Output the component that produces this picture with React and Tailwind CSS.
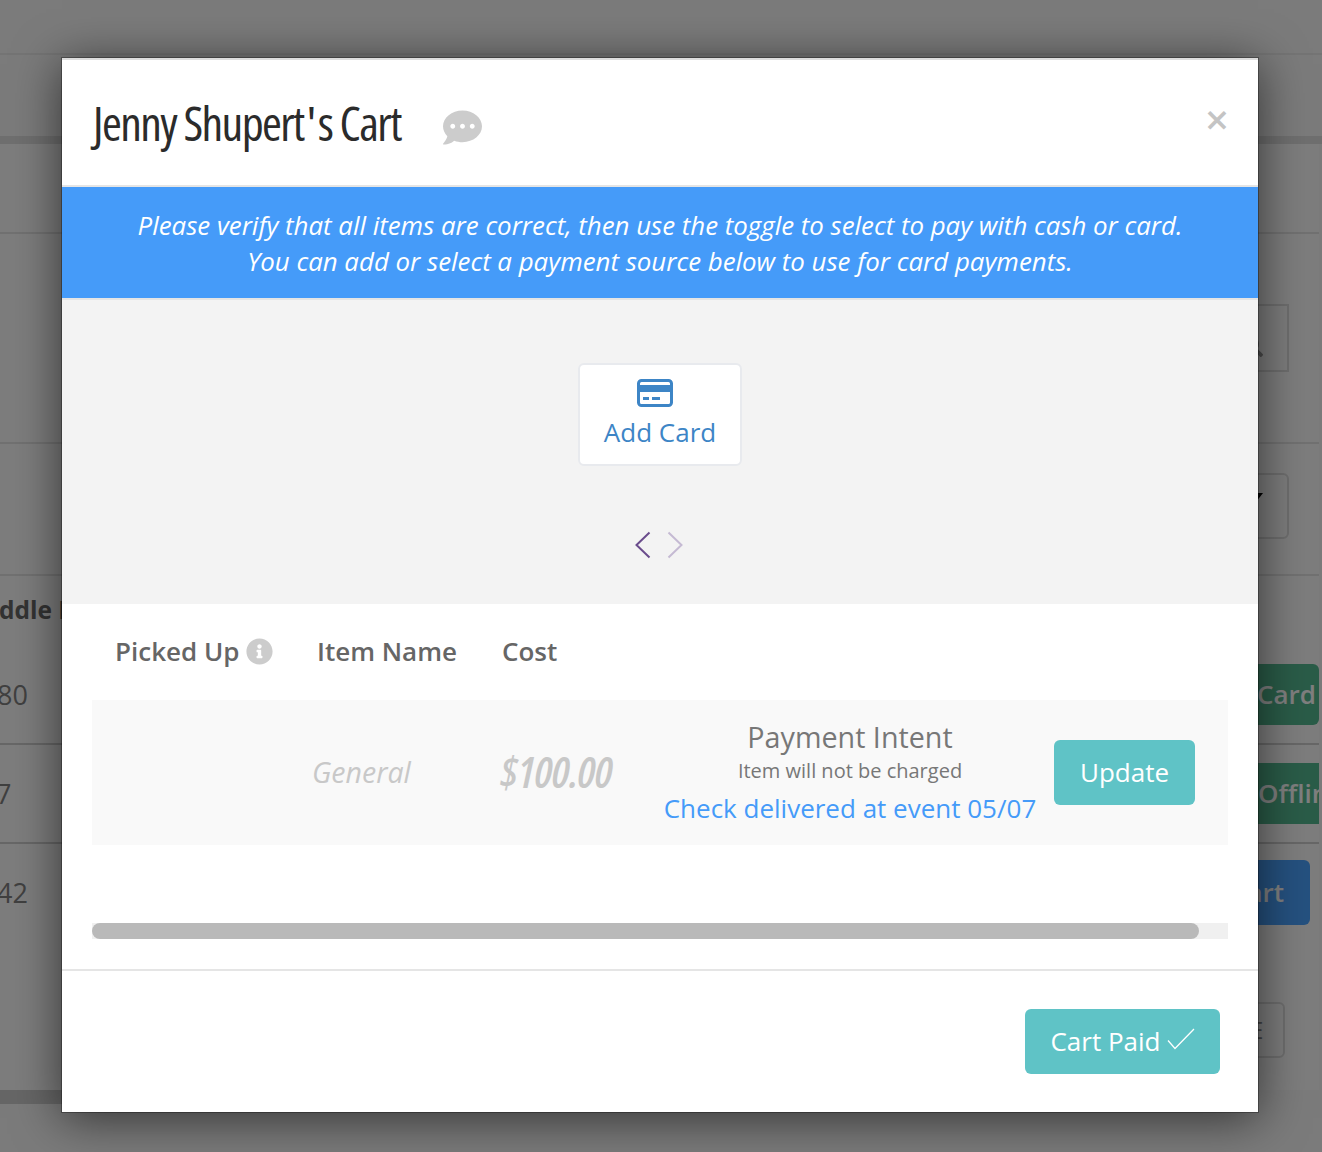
import { FaCommentDots, FaInfoCircle, FaSearch } from "react-icons/fa";

const sans = "font-['Open_Sans',sans-serif]";

function BackgroundPage() {
  return (
    <div className={`flex h-full w-full flex-col bg-[#f6f6f6] ${sans}`}>
      <div className="h-[55px] shrink-0 border-b-2 border-[#e8e8e8]" />
      <div className="h-[81px] shrink-0" />
      <div className="h-[8px] shrink-0 bg-[#dedede]" />
      <div className="h-[946px] w-[1319px] shrink-0 bg-[#fbfbfb]">
        <div className="h-[90px] border-b-2 border-[#e2e2e2]" />
        <div className="flex h-[210px] items-start justify-end border-b-2 border-[#e2e2e2] pr-[30px] pt-[70px]">
          <div className="flex h-[68px] w-[120px] items-center justify-end border-2 border-[#dcdcdc] pr-[24px] pt-[16px]">
            <FaSearch className="text-[22px] text-[#999999]" />
          </div>
        </div>
        <div className="flex h-[132px] items-start justify-end border-b-2 border-[#e2e2e2] pr-[30px] pt-[29px]">
          <div className="h-[66px] w-[120px] rounded-md border-2 border-[#dcdcdc] pl-[78px] pt-[18px]">
            <div className="h-0 w-0 border-x-[7px] border-t-[9px] border-x-transparent border-t-black" />
          </div>
        </div>
        <div className="flex h-[70px] items-center pb-[2px]">
          <span className="-ml-[1px] text-[24.5px] font-bold leading-none text-[#666]">ddle N</span>
        </div>
        <div className="flex h-[99px] items-start justify-between border-b-2 border-[#cfcfcf] pt-[18px]">
          <span className="-ml-[3px] text-[27px] leading-[62px] text-[#808080]">80</span>
          <div className="flex h-[61px] w-[130px] items-center justify-end rounded-md bg-[#54b890] pr-[3px] text-[26px] font-semibold text-white">
            Card
          </div>
        </div>
        <div className="flex h-[99px] items-start justify-between border-b-2 border-[#cfcfcf] pt-[18px]">
          <span className="-ml-[4px] text-[27px] leading-[62px] text-[#808080]">7</span>
          <div className="flex h-[61px] w-[130px] items-center overflow-hidden rounded-l-md bg-[#54b890] pl-[69px] text-[26px] font-semibold whitespace-nowrap text-white">
            Offline
          </div>
        </div>
        <div className="flex h-[158px] items-start justify-between pr-[9px] pt-[16px]">
          <span className="-ml-[3px] text-[27px] leading-[66px] text-[#808080]">42</span>
          <div className="flex h-[65px] w-[130px] items-center justify-end rounded-md bg-[#4aa3ff] pr-[26px] text-[26px] font-semibold text-white">
            art
          </div>
        </div>
        <div className="flex h-[88px] items-start justify-end pr-[34px]">
          <div className="flex h-[56px] w-[120px] items-center rounded-md border-2 border-[#dcdcdc] pl-[83px] text-[24px] text-[#888]">
            E
          </div>
        </div>
      </div>
      <div className="h-[14px] w-[62px] shrink-0 bg-[#cccccc]" />
    </div>
  );
}

function CardIcon() {
  return (
    <svg width="36" height="28" viewBox="0 0 36 28" fill="none">
      <rect x="1.5" y="1.5" width="33" height="25" rx="3" stroke="#3d85c6" strokeWidth="3" />
      <rect x="1" y="6" width="34" height="7" fill="#3d85c6" />
      <rect x="6" y="18" width="6" height="3" fill="#3d85c6" />
      <rect x="15" y="18" width="8" height="3" fill="#3d85c6" />
    </svg>
  );
}

function Arrow({ flip, color }) {
  return (
    <svg width="16" height="28" viewBox="0 0 16 28" fill="none" className={flip ? "rotate-180" : ""}>
      <path d="M14.5 1.5 1.5 14l13 12.5" stroke={color} strokeWidth="2" />
    </svg>
  );
}

function Modal() {
  return (
    <div className={`absolute left-[62px] top-[58px] flex h-[1054px] w-[1196px] flex-col bg-white shadow-[0_6px_45px_rgba(0,0,0,0.6)] ring-1 ring-black/30 ${sans}`}>
      <header className="relative flex h-[129px] shrink-0 items-center border-y-2 border-[#e5e5e5] border-t-[#dddddd] pl-[31px]">
        <h1 className="font-['Open_Sans',sans-serif] text-[48px] leading-none tracking-[-1.6px] text-[#2b2b2b] [font-stretch:75%]">
          Jenny Shupert<span className="mx-[3px]">'</span>s Cart
        </h1>
        <FaCommentDots className="ml-[42px] mt-[10px] text-[39px] text-[#cccccc]" />
        <button className="absolute right-[29px] top-[38px] text-[42px] font-semibold leading-none text-[#c4c4c4]">×</button>
      </header>

      <div className="flex h-[113px] shrink-0 flex-col items-center justify-center border-b-2 border-[#e5e5e5] bg-[#459bf9] text-[25.85px] font-medium italic leading-[36px] text-white">
        <p>Please verify that all items are correct, then use the toggle to select to pay with cash or card.</p>
        <p>You can add or select a payment source below to use for card payments.</p>
      </div>

      <div className="flex h-[304px] shrink-0 flex-col items-center bg-[#f3f3f3] pt-[63px]">
        <button className="flex h-[103px] w-[164px] flex-col items-center rounded-md border-2 border-[#e8eaee] bg-white pt-[14px] text-[26px] leading-[38px] text-[#3d85c6]">
          <span className="-ml-[10px] mb-[6px] flex h-[28px]">
            <CardIcon />
          </span>
          Add Card
        </button>
        <div className="-ml-[3px] mt-[65px] flex gap-[16px]">
          <Arrow color="#6a4c8c" />
          <Arrow color="#c5bad3" flip />
        </div>
      </div>

      <div className="flex h-[367px] shrink-0 flex-col border-b-2 border-[#e5e5e5] px-[30px]">
        <div className="flex h-[96px] shrink-0 items-center pb-[2px] text-[26px] font-semibold text-[#666666]">
          <div className="flex w-[225px] items-center gap-[7px] pl-[23px]">
            Picked Up
            <FaInfoCircle className="text-[27px] text-[#cccccc]" />
          </div>
          <div className="w-[185px]">Item Name</div>
          <div>Cost</div>
        </div>
        <div className="flex h-[145px] shrink-0 items-center bg-[#f9f9f9]">
          <div className="w-[220px]" />
          <div className="w-[188px] text-[28.5px] italic text-[#c8c8c8]">General</div>
          <div className="-mt-[3px] w-[155px] text-[44px] font-semibold italic leading-none tracking-[-0.8px] text-[#c8c8c8] [font-stretch:75%]">$100.00</div>
          <div className="mt-[3px] flex w-[390px] flex-col items-center text-center">
            <div className="text-[28.7px] leading-[40px] text-[#777777]">Payment Intent</div>
            <div className="text-[20px] leading-[28px] text-[#777777]">Item will not be charged</div>
            <div className="text-[26px] leading-[47px] text-[#459bf9]">Check delivered at event 05/07</div>
          </div>
          <button className="ml-[9px] h-[65px] w-[141px] rounded-md bg-[#5fc3c6] text-[26px] text-white">Update</button>
        </div>
        <div className="mt-[78px] h-[16px] shrink-0 bg-[#f0f0f0]">
          <div className="h-full w-[1107px] rounded-full bg-[#b9b9b9]" />
        </div>
      </div>

      <footer className="flex flex-1 items-start justify-end pr-[38px] pt-[38px]">
        <button className="flex h-[65px] w-[195px] items-center justify-center gap-[6px] rounded-md bg-[#5fc3c6] text-[26px] text-white">
          Cart Paid
          <svg width="28" height="22" viewBox="0 0 28 22" fill="none" className="-mt-[5px]">
            <path d="M1 12.5 8 20.5 27 1" stroke="white" strokeWidth="1.3" />
          </svg>
        </button>
      </footer>
    </div>
  );
}

export default function App() {
  return (
    <div className="relative h-[1152px] w-full overflow-hidden">
      <BackgroundPage />
      <div className="absolute inset-0 bg-black/50" />
      <Modal />
    </div>
  );
}
